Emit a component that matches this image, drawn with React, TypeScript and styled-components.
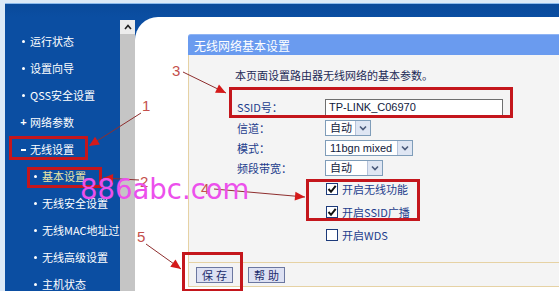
import React from "react";
import styled, { createGlobalStyle } from "styled-components";

const CJK = `"Noto Sans CJK SC", "Liberation Sans", sans-serif`;
const LATIN = `"Liberation Sans", Arial, "Noto Sans CJK SC", sans-serif`;

const GlobalStyle = createGlobalStyle`
  html, body { margin: 0; padding: 0; }
  body {
    width: 559px;
    height: 291px;
    overflow: hidden;
    background: #dce9f7;
    font-family: ${CJK};
  }
`;

const Page = styled.div`
  position: relative;
  width: 559px;
  height: 291px;
  box-sizing: border-box;
  padding: 3px 0 0 5px;
  background: #dce9f7;
  overflow: hidden;
  display: flex;
`;

const Frame = styled.div`
  flex: 1;
  display: flex;
  flex-direction: column;
  background: #0b4ea2;
  border-top: 1px solid #8dbbec;
  min-width: 0;
`;

const TopBar = styled.div`
  height: 13px;
  flex: none;
  background: linear-gradient(#0a4a9a, #0b4ea2);
`;

const Body = styled.div`
  flex: 1;
  display: flex;
  min-height: 0;
`;

const Sidebar = styled.div`
  width: 130px;
  flex: none;
  display: flex;
`;

const Menu = styled.ul`
  list-style: none;
  margin: 0;
  padding: 11px 0 0 0;
  width: 115px;
  overflow: hidden;
  white-space: nowrap;
`;

const MenuItem = styled.li<{ $level: number; $active?: boolean }>`
  display: flex;
  align-items: center;
  height: 27px;
  padding-left: ${(p) => (p.$level ? 27 : 15)}px;
  font-size: 11px;
  line-height: 27px;
  color: ${(p) => (p.$active ? "#ece7a6" : "#ffffff")};
`;

const Marker = styled.span`
  width: 7px;
  margin-right: 3px;
  flex: none;
  display: flex;
  align-items: center;
  justify-content: center;
  color: #ffffff;
  font-family: ${LATIN};
  font-weight: bold;
  font-size: 11px;
`;

const Dot = styled.span`
  width: 3px;
  height: 3px;
  border-radius: 50%;
  background: #ffffff;
`;

const Dash = styled.span`
  width: 5px;
  height: 2px;
  background: #ffffff;
`;

const ScrollBar = styled.div`
  width: 15px;
  flex: none;
  margin-top: 3px;
  background: #c5c5c5;
  display: flex;
  flex-direction: column;
`;

const ScrollUp = styled.div`
  height: 14px;
  background: #ececec;
  display: flex;
  align-items: center;
  justify-content: center;
`;

const Content = styled.div`
  flex: 1;
  min-width: 0;
  background: #ffffff;
  border-top-left-radius: 23px;
  padding: 17px 0 0 53px;
  overflow: hidden;
`;

const Panel = styled.div`
  display: flex;
  flex-direction: column;
  margin-right: -10px;
`;

const PanelHeader = styled.div`
  height: 21px;
  line-height: 21px;
  padding-left: 6px;
  background: #6a9bef;
  border-top: 1px solid #8fb4f4;
  box-sizing: border-box;
  border-top-left-radius: 3px;
  color: #ffffff;
  font-size: 12px;
`;

const PanelBody = styled.div`
  background: #f4f4f4;
  border-left: 1px solid #e6d2a4;
  padding: 13px 0 16px 46px;
`;

const Intro = styled.div`
  font-size: 11px;
  line-height: 14px;
  color: #1c2a56;
`;

const Fields = styled.div`
  margin: 16px 0 0 2px;
  display: flex;
  flex-direction: column;
  gap: 4px;
`;

const FieldRow = styled.div<{ $h: number }>`
  height: ${(p) => p.$h}px;
  display: flex;
  align-items: center;
`;

const Label = styled.span`
  width: 88px;
  flex: none;
  font-size: 11px;
  color: #1d3d8c;
`;

const TextInput = styled.div`
  width: 178px;
  height: 17px;
  box-sizing: border-box;
  border: 1px solid #6f6f6f;
  background: #ffffff;
  padding-left: 3px;
  font-family: ${LATIN};
  font-size: 11px;
  line-height: 15px;
  color: #111a3c;
`;

const Select = styled.div<{ $w: number }>`
  width: ${(p) => p.$w}px;
  height: 16px;
  box-sizing: border-box;
  border: 1px solid #7f9db9;
  background: #ffffff;
  display: flex;
  align-items: stretch;
`;

const SelectValue = styled.span`
  flex: 1;
  padding-left: 4px;
  font-family: ${LATIN};
  font-size: 11px;
  line-height: 14px;
  color: #111a3c;
  white-space: nowrap;
  overflow: hidden;
`;

const DropBtn = styled.span`
  width: 14px;
  flex: none;
  background: #dfe6f3;
  border-left: 1px solid #b6c3da;
  display: flex;
  align-items: center;
  justify-content: center;
`;

const Checks = styled.div`
  margin: 1px 0 0 91px;
  display: flex;
  flex-direction: column;
`;

const CheckRow = styled.div`
  height: 23px;
  display: flex;
  align-items: center;
  gap: 4px;
  font-size: 11px;
  color: #1d3d8c;
`;

const CheckBox = styled.span`
  width: 12px;
  height: 12px;
  box-sizing: border-box;
  border: 1px solid #1c3a7a;
  background: #ffffff;
  display: flex;
  align-items: center;
  justify-content: center;
`;

const ButtonRow = styled.div`
  height: 25px;
  box-sizing: border-box;
  display: flex;
  align-items: center;
  gap: 15px;
  padding-left: 7px;
  background: #f4f4f4;
  border-top: 1px solid #e6d2a4;
  border-bottom: 1px solid #e6d2a4;
  border-left: 1px solid #e6d2a4;
`;

const Button = styled.button`
  width: 37px;
  height: 16px;
  box-sizing: border-box;
  padding: 0 0 0 3px;
  background: #dde1f3;
  border: 1px solid #6b77a0;
  font-family: ${CJK};
  font-size: 11px;
  line-height: 14px;
  letter-spacing: 3px;
  color: #1b2b6b;
`;

/* ---------- annotation overlay ---------- */

const Annot = styled.svg`
  position: absolute;
  left: 0;
  top: 0;
  pointer-events: none;
`;

const Num = styled.span<{ $x: number; $y: number }>`
  position: absolute;
  left: ${(p) => p.$x}px;
  top: ${(p) => p.$y}px;
  font-family: ${LATIN};
  font-size: 15px;
  line-height: 15px;
  color: #c4504c;
`;

const Watermark = styled.span`
  position: absolute;
  left: 80px;
  top: 176px;
  font-family: "DejaVu Sans", sans-serif;
  font-size: 27.5px;
  line-height: 27px;
  color: #ec50ec;
  white-space: nowrap;
`;

const Chevron = ({ up }: { up?: boolean }) => (
  <svg width="8" height="6" viewBox="0 0 8 6">
    <path
      d={up ? "M1 5 L4 1.5 L7 5" : "M1 1.5 L4 4.5 L7 1.5"}
      fill="none"
      stroke={up ? "#222" : "#4a5a7a"}
      strokeWidth="1.6"
    />
  </svg>
);

const Tick = () => (
  <svg width="10" height="10" viewBox="0 0 10 10">
    <path d="M1.5 5 L4 7.8 L8.7 1.8" fill="none" stroke="#111" strokeWidth="2" />
  </svg>
);

const boxes = [
  [9, 136, 88, 160],
  [27, 167, 102, 188],
  [229, 87, 513, 118],
  [306, 179, 420, 221],
  [182, 252, 243, 292],
];

const arrows = [
  [141, 113, 89, 146],
  [139, 180, 103, 178],
  [183, 72, 226, 93],
  [214, 189, 305, 197],
  [146, 244, 181, 269],
];

function head(x1: number, y1: number, x2: number, y2: number) {
  const a = Math.atan2(y2 - y1, x2 - x1);
  const len = 10;
  const w = 4.5;
  const bx = x2 - len * Math.cos(a);
  const by = y2 - len * Math.sin(a);
  const px = -Math.sin(a) * w;
  const py = Math.cos(a) * w;
  return `${x2},${y2} ${bx + px},${by + py} ${bx - px},${by - py}`;
}

const menu: { text: string; level: number; mark: "dot" | "plus" | "minus"; active?: boolean }[] = [
  { text: "运行状态", level: 0, mark: "dot" },
  { text: "设置向导", level: 0, mark: "dot" },
  { text: "QSS安全设置", level: 0, mark: "dot" },
  { text: "网络参数", level: 0, mark: "plus" },
  { text: "无线设置", level: 0, mark: "minus" },
  { text: "基本设置", level: 1, mark: "dot", active: true },
  { text: "无线安全设置", level: 1, mark: "dot" },
  { text: "无线MAC地址过滤", level: 1, mark: "dot" },
  { text: "无线高级设置", level: 1, mark: "dot" },
  { text: "主机状态", level: 1, mark: "dot" },
];

export default function App() {
  return (
    <>
      <GlobalStyle />
      <Page>
        <Frame>
          <TopBar />
          <Body>
            <Sidebar>
              <Menu>
                {menu.map((m) => (
                  <MenuItem key={m.text} $level={m.level} $active={m.active}>
                    <Marker>
                      {m.mark === "dot" && <Dot />}
                      {m.mark === "plus" && "+"}
                      {m.mark === "minus" && <Dash />}
                    </Marker>
                    {m.text}
                  </MenuItem>
                ))}
              </Menu>
              <ScrollBar>
                <ScrollUp>
                  <Chevron up />
                </ScrollUp>
              </ScrollBar>
            </Sidebar>
            <Content>
              <Panel>
                <PanelHeader>无线网络基本设置</PanelHeader>
                <PanelBody>
                  <Intro>本页面设置路由器无线网络的基本参数。</Intro>
                  <Fields>
                    <FieldRow $h={18}>
                      <Label>SSID号：</Label>
                      <TextInput>TP-LINK_C06970</TextInput>
                    </FieldRow>
                    <FieldRow $h={16}>
                      <Label>信道：</Label>
                      <Select $w={46}>
                        <SelectValue>自动</SelectValue>
                        <DropBtn>
                          <Chevron />
                        </DropBtn>
                      </Select>
                    </FieldRow>
                    <FieldRow $h={16}>
                      <Label>模式：</Label>
                      <Select $w={88}>
                        <SelectValue>11bgn mixed</SelectValue>
                        <DropBtn>
                          <Chevron />
                        </DropBtn>
                      </Select>
                    </FieldRow>
                    <FieldRow $h={16}>
                      <Label>频段带宽：</Label>
                      <Select $w={58}>
                        <SelectValue>自动</SelectValue>
                        <DropBtn>
                          <Chevron />
                        </DropBtn>
                      </Select>
                    </FieldRow>
                  </Fields>
                  <Checks>
                    <CheckRow>
                      <CheckBox>
                        <Tick />
                      </CheckBox>
                      开启无线功能
                    </CheckRow>
                    <CheckRow>
                      <CheckBox>
                        <Tick />
                      </CheckBox>
                      开启SSID广播
                    </CheckRow>
                    <CheckRow>
                      <CheckBox />
                      开启WDS
                    </CheckRow>
                  </Checks>
                </PanelBody>
                <ButtonRow>
                  <Button>保存</Button>
                  <Button>帮助</Button>
                </ButtonRow>
              </Panel>
            </Content>
          </Body>
        </Frame>

        <Num $x={142} $y={98}>1</Num>
        <Num $x={140} $y={174}>2</Num>
        <Num $x={172} $y={63}>3</Num>
        <Num $x={201} $y={181}>4</Num>
        <Num $x={137} $y={229}>5</Num>

        <Annot width="559" height="291" viewBox="0 0 559 291">
          {boxes.map(([x0, y0, x1, y1], i) => (
            <rect
              key={i}
              x={x0 + 1.5}
              y={y0 + 1.5}
              width={x1 - x0 - 3}
              height={y1 - y0 - 3}
              fill="none"
              stroke="#c4161c"
              strokeWidth="3"
            />
          ))}
          {arrows.map(([x1, y1, x2, y2], i) => (
            <g key={i}>
              <line x1={x1} y1={y1} x2={x2} y2={y2} stroke="#8e2e2e" strokeWidth="1" />
              <polygon points={head(x1, y1, x2, y2)} fill="#d41a1a" />
            </g>
          ))}
        </Annot>

        <Watermark>886abc.com</Watermark>
      </Page>
    </>
  );
}
